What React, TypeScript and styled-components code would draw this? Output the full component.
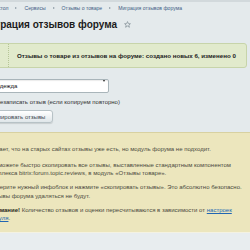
import React from "react";
import styled, { createGlobalStyle } from "styled-components";

const GlobalStyle = createGlobalStyle`
  html, body {
    margin: 0;
    padding: 0;
  }
  body {
    background: #e4eaec;
    font-family: "Liberation Sans", Arial, sans-serif;
  }
`;

const Page = styled.div`
  width: 250px;
  height: 250px;
  overflow: hidden;
  display: flex;
  flex-direction: column;
  box-sizing: border-box;
  background: #e4eaec;
  border-top: 2px solid #d2d9dc;
`;

// Breadcrumbs
const Crumbs = styled.nav`
  display: flex;
  align-items: center;
  height: 9px;
  margin: 1px 0 0 -23.5px;
  font-size: 5.1px;
  color: #3e5d84;
  white-space: nowrap;
`;

const CrumbArrow = styled.span`
  flex: none;
  width: 0;
  height: 0;
  margin: 0 7px;
  border-left: 2px solid #8a98a3;
  border-top: 1.5px solid transparent;
  border-bottom: 1.5px solid transparent;
`;

// Title
const TitleRow = styled.div`
  display: flex;
  align-items: center;
  gap: 7px;
  height: 14px;
  margin: 5px 0 0 -18.5px;
`;

const Title = styled.h1`
  margin: 0;
  font-size: 10px;
  font-weight: bold;
  color: #1c1c1c;
  white-space: nowrap;
`;

// Green result message
const Message = styled.div`
  display: flex;
  height: 25px;
  box-sizing: border-box;
  margin: 12px 3px 0 -22px;
  background: #e1eacc;
  border: 1px solid #c7d4aa;
  border-radius: 3px;
`;

const MessageIcon = styled.div`
  flex: none;
  width: 29px;
  border-right: 1px dotted #b6c597;
`;

const MessageText = styled.div`
  display: flex;
  align-items: center;
  padding-left: 8px;
  font-size: 6.2px;
  font-weight: bold;
  color: #222;
  white-space: nowrap;
`;

// Form
const Form = styled.form`
  display: flex;
  flex-direction: column;
  align-items: flex-start;
  margin: 6px 0 0 -23px;
`;

const SelectWrap = styled.div`
  position: relative;
  margin-left: 14px;
  width: 118px;
  height: 14px;
`;

const Select = styled.select`
  appearance: none;
  width: 100%;
  height: 100%;
  box-sizing: border-box;
  padding: 0 0 0 3.3px;
  font-family: inherit;
  font-size: 6px;
  color: #111;
  background: #fff;
  border: 1px solid #a9b5ba;
  border-radius: 2px;
  box-shadow: inset 0 1px 1px rgba(0, 0, 0, 0.08);
  outline: none;
`;

const SelectArrow = styled.span`
  position: absolute;
  right: 4px;
  top: 6px;
  width: 0;
  height: 0;
  border-top: 2.5px solid #222;
  border-left: 1.5px solid transparent;
  border-right: 1.5px solid transparent;
  pointer-events: none;
`;

const CheckRow = styled.label`
  display: flex;
  align-items: center;
  gap: 4px;
  height: 10px;
  margin-top: 9px;
  font-size: 6px;
  color: #333;
  white-space: nowrap;
`;

const Check = styled.input`
  width: 8px;
  height: 8px;
  margin: 0;
`;

const Button = styled.button`
  height: 13px;
  margin: 3px 0 0 3px;
  padding: 0 7px 0 6.4px;
  font-family: inherit;
  font-size: 6px;
  color: #3a464e;
  white-space: nowrap;
  background: linear-gradient(#ffffff, #dfe6e9);
  border: 1px solid #b7c2c6;
  border-radius: 3px;
  box-shadow: 0 1px 1px rgba(0, 0, 0, 0.12);
`;

// Yellow note
const Note = styled.div`
  margin: 9px 0 0 -20px;
  padding: 12px 0 10px 8px;
  background: #ece6bd;
  border-top: 1px solid #d8d1a1;
  border-bottom: 1px solid #f4f2e2;
  font-size: 6px;
  line-height: 8.3px;
  color: #4b4a3d;
  white-space: nowrap;
`;

const NoteParagraph = styled.p<{ $gap: number }>`
  margin: 0 0 ${({ $gap }) => $gap}px;
`;

const Strong = styled.b`
  color: #2a2a22;
`;

const Link = styled.a`
  color: #2266b3;
  text-decoration: underline;
`;

const Footer = styled.div`
  flex: 1;
  background: #e8edef;
`;

const Star = () => (
  <svg width="7" height="7" viewBox="0 0 24 24" fill="none" stroke="#7f8c93" strokeWidth="2.4" strokeLinejoin="round">
    <polygon points="12,2 15,9 22,9.3 16.6,14 18.5,21.5 12,17.3 5.5,21.5 7.4,14 2,9.3 9,9" />
  </svg>
);

const crumbs = ["Рабочий стол", "Сервисы", "Отзывы о товаре", "Миграция отзывов форума"];

const App: React.FC = () => {
  return (
    <>
      <GlobalStyle />
      <Page>
        <Crumbs>
          {crumbs.map((crumb, i) => (
            <React.Fragment key={crumb}>
              {i > 0 && <CrumbArrow />}
              <span>{crumb}</span>
            </React.Fragment>
          ))}
        </Crumbs>

        <TitleRow>
          <Title>Миграция отзывов форума</Title>
          <Star />
        </TitleRow>

        <Message>
          <MessageIcon />
          <MessageText>Отзывы о товаре из отзывов на форуме: создано новых 6, изменено 0</MessageText>
        </Message>

        <Form onSubmit={(e) => e.preventDefault()}>
          <SelectWrap>
            <Select defaultValue="clothes">
              <option value="clothes">Одежда</option>
            </Select>
            <SelectArrow />
          </SelectWrap>
          <CheckRow>
            <Check type="checkbox" />
            Перезаписать отзыв (если копируем повторно)
          </CheckRow>
          <Button type="submit">Скопировать отзывы</Button>
        </Form>

        <Note>
          <NoteParagraph $gap={7.7}>
            Бывает, что на старых сайтах отзывы уже есть, но модуль форума не подходит.
          </NoteParagraph>
          <NoteParagraph $gap={5.8}>
            Вы можете быстро скопировать все отзывы, выставленные стандартным компонентом
            <br />
            комплекса bitrix:forum.topic.reviews, в модуль «Отзывы товаре».
          </NoteParagraph>
          <NoteParagraph $gap={5.8}>
            Выберите нужный инфоблок и нажмите «скопировать отзывы». Это абсолютно безопасно.
            <br />
            Отзывы форума удаляться не будут.
          </NoteParagraph>
          <NoteParagraph $gap={0}>
            <Strong>Внимание!</Strong> Количество отзывов и оценки пересчитываются в зависимости от{" "}
            <Link href="#">настроек</Link>
            <br />
            <Link href="#">модуля</Link>.
          </NoteParagraph>
        </Note>

        <Footer />
      </Page>
    </>
  );
};

export default App;
